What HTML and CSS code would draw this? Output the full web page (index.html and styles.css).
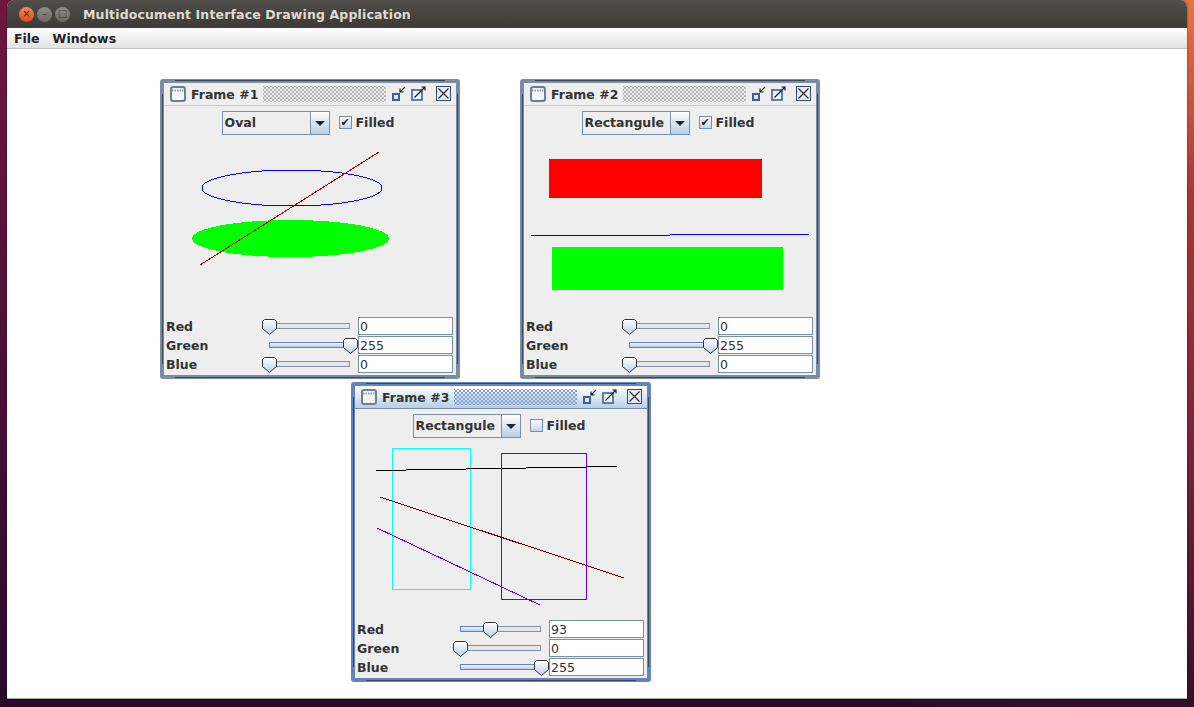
FILE: index.html
```html
<!DOCTYPE html>
<html lang="en">
<head>
    <meta charset="UTF-8">
    <title>Multidocument Interface Drawing Application</title>
    <link rel="stylesheet" href="styles.css">
</head>
<body>
    <svg class="defs" width="0" height="0">
        <defs>
            <linearGradient id="thumbFill" x1="0" y1="0" x2="0" y2="1">
                <stop offset="0" stop-color="#ffffff"/>
                <stop offset="1" stop-color="#b8cfe5"/>
            </linearGradient>
            <symbol id="thumb" viewBox="0 0 15 16">
                <path d="M.5 2.5 2.5 .5h10l2 2v7l-7 6-7-6z" fill="url(#thumbFill)" stroke="#333"/>
            </symbol>
            <symbol id="frameIcon" viewBox="0 0 16 16">
                <rect x="1" y="1" width="14" height="14" rx="2" fill="#f4f4f4" stroke="#6d7f92" stroke-width="2"/>
                <path d="M2 4.5h12" stroke="#8fa3bd" stroke-width="2" stroke-dasharray="1.5 1"/>
            </symbol>
            <symbol id="iconify" viewBox="0 0 15 15">
                <rect x="1" y="8" width="6" height="6" fill="#dfe8f4" stroke="#3f5f92" stroke-width="2"/>
                <path d="M13 1 8 6M8 2.5V6h3.5" fill="none" stroke="#111" stroke-width="1.1"/>
            </symbol>
            <symbol id="maximize" viewBox="0 0 15 15">
                <rect x="1" y="4" width="10" height="10" fill="#eef2f8" stroke="#3f5f92" stroke-width="1.6"/>
                <path d="M3.5 11.5 14 1M10.5 1H14v3.5" fill="none" stroke="#111" stroke-width="1.1"/>
            </symbol>
            <symbol id="close" viewBox="0 0 15 15">
                <rect x=".5" y=".5" width="14" height="14" fill="#e4ebf5" stroke="#33496f"/>
                <path d="M2.5 2.5l10 10M12.5 2.5l-10 10" stroke="#222" stroke-width="1.1"/>
            </symbol>
        </defs>
    </svg>

    <div class="window">
        <header class="titlebar">
            <div class="controls">
                <span class="ctl ctl-close">&#215;</span>
                <span class="ctl ctl-min">&#8211;</span>
                <span class="ctl ctl-max">&#9633;</span>
            </div>
            <span class="app-title">Multidocument Interface Drawing Application</span>
        </header>
        <nav class="menubar">
            <span>File</span>
            <span>Windows</span>
        </nav>

        <main class="desktop">

            <section class="frame frame-1">
                <div class="frame-title">
                    <svg class="frame-icon"><use href="#frameIcon"/></svg>
                    <span class="frame-name">Frame #1</span>
                    <span class="grip"></span>
                    <svg class="btn-icon"><use href="#iconify"/></svg>
                    <svg class="btn-icon"><use href="#maximize"/></svg>
                    <svg class="btn-close"><use href="#close"/></svg>
                </div>
                <div class="tools">
                    <div class="combo"><span class="combo-text">Oval</span><span class="combo-arrow"></span></div>
                    <label class="check"><span class="box">&#10004;</span>Filled</label>
                </div>
                <svg class="canvas" viewBox="0 0 292 178" shape-rendering="crispEdges">
                    <ellipse cx="128" cy="49" rx="90" ry="18" fill="none" stroke="#0000ff"/>
                    <ellipse cx="126.5" cy="99.5" rx="98.5" ry="18.5" fill="#00ff00"/>
                    <line x1="215" y1="13" x2="36" y2="126" stroke="#b00000"/>
                </svg>
                <div class="sliders">
                    <span class="lbl">Red</span>
                    <div class="slider"><div class="track"><svg class="thumb" style="left: 0%"><use href="#thumb"/></svg></div></div>
                    <span class="field">0</span>
                    <span class="lbl">Green</span>
                    <div class="slider"><div class="track"><div class="fill" style="width: 100%"></div><svg class="thumb" style="left: 100%"><use href="#thumb"/></svg></div></div>
                    <span class="field">255</span>
                    <span class="lbl">Blue</span>
                    <div class="slider"><div class="track"><svg class="thumb" style="left: 0%"><use href="#thumb"/></svg></div></div>
                    <span class="field">0</span>
                </div>
            </section>

            <section class="frame frame-2">
                <div class="frame-title">
                    <svg class="frame-icon"><use href="#frameIcon"/></svg>
                    <span class="frame-name">Frame #2</span>
                    <span class="grip"></span>
                    <svg class="btn-icon"><use href="#iconify"/></svg>
                    <svg class="btn-icon"><use href="#maximize"/></svg>
                    <svg class="btn-close"><use href="#close"/></svg>
                </div>
                <div class="tools">
                    <div class="combo"><span class="combo-text">Rectangule</span><span class="combo-arrow"></span></div>
                    <label class="check"><span class="box">&#10004;</span>Filled</label>
                </div>
                <svg class="canvas" viewBox="0 0 292 178" shape-rendering="crispEdges">
                    <rect x="25" y="20" width="213" height="39" fill="#ff0000"/>
                    <rect x="28" y="108" width="231" height="43" fill="#00ff00"/>
                    <path d="M7 96.5H146M146 95.5H285" stroke="#0000ff" fill="none"/>
                </svg>
                <div class="sliders">
                    <span class="lbl">Red</span>
                    <div class="slider"><div class="track"><svg class="thumb" style="left: 0%"><use href="#thumb"/></svg></div></div>
                    <span class="field">0</span>
                    <span class="lbl">Green</span>
                    <div class="slider"><div class="track"><div class="fill" style="width: 100%"></div><svg class="thumb" style="left: 100%"><use href="#thumb"/></svg></div></div>
                    <span class="field">255</span>
                    <span class="lbl">Blue</span>
                    <div class="slider"><div class="track"><svg class="thumb" style="left: 0%"><use href="#thumb"/></svg></div></div>
                    <span class="field">0</span>
                </div>
            </section>

            <section class="frame frame-3 active">
                <div class="frame-title">
                    <svg class="frame-icon"><use href="#frameIcon"/></svg>
                    <span class="frame-name">Frame #3</span>
                    <span class="grip"></span>
                    <svg class="btn-icon"><use href="#iconify"/></svg>
                    <svg class="btn-icon"><use href="#maximize"/></svg>
                    <svg class="btn-close"><use href="#close"/></svg>
                </div>
                <div class="tools">
                    <div class="combo"><span class="combo-text">Rectangule</span><span class="combo-arrow"></span></div>
                    <label class="check"><span class="box"></span>Filled</label>
                </div>
                <svg class="canvas" viewBox="0 0 292 178" shape-rendering="crispEdges">
                    <rect x="37.5" y="6.5" width="78" height="141" fill="none" stroke="#00ffff"/>
                    <rect x="146.5" y="11.5" width="85" height="146" fill="none" stroke="#5d00ff"/>
                    <path d="M21 28.5H51M51 27.5H111M111 26.5H171M171 25.5H231M231 24.5H262" stroke="#000" fill="none"/>
                    <line x1="25" y1="55" x2="269" y2="136" stroke="#5d0000"/>
                    <line x1="22" y1="86" x2="185" y2="163" stroke="#5d00ff"/>
                </svg>
                <div class="sliders">
                    <span class="lbl">Red</span>
                    <div class="slider"><div class="track"><div class="fill" style="width: 36.5%"></div><svg class="thumb" style="left: 36.5%"><use href="#thumb"/></svg></div></div>
                    <span class="field">93</span>
                    <span class="lbl">Green</span>
                    <div class="slider"><div class="track"><svg class="thumb" style="left: 0%"><use href="#thumb"/></svg></div></div>
                    <span class="field">0</span>
                    <span class="lbl">Blue</span>
                    <div class="slider"><div class="track"><div class="fill" style="width: 100%"></div><svg class="thumb" style="left: 100%"><use href="#thumb"/></svg></div></div>
                    <span class="field">255</span>
                </div>
            </section>

        </main>
    </div>
</body>
</html>
```

FILE: styles.css
```css
* {
    box-sizing: border-box;
}

html, body {
    height: 100%;
}

body {
    margin: 0;
    padding: 0 7px 8px;
    overflow: hidden;
    font-family: 'DejaVu Sans', sans-serif;
    font-size: 12.5px;
    color: #333;
    background:
        radial-gradient(circle at 100% 0, #e8743f 0, rgba(200, 70, 50, 0.7) 14%, rgba(120, 20, 50, 0) 55%),
        linear-gradient(180deg, #6f1740 0%, #4a1038 55%, #260a2c 100%);
}

.defs {
    position: absolute;
}

/* main window */
.window {
    height: 100%;
    display: flex;
    flex-direction: column;
    background: #fff;
    border-radius: 7px 7px 0 0;
    box-shadow: 0 0 2px rgba(0, 0, 0, 0.6);
}

.titlebar {
    height: 28px;
    flex: none;
    display: flex;
    align-items: center;
    padding-left: 12px;
    background: linear-gradient(180deg, #4f4e49, #3c3b37);
    border-radius: 7px 7px 0 0;
}

.controls {
    display: flex;
    gap: 3px;
}

.ctl {
    width: 15px;
    height: 15px;
    border-radius: 50%;
    display: flex;
    align-items: center;
    justify-content: center;
    font-size: 10px;
    line-height: 1;
    color: #3c3b37;
    background: linear-gradient(180deg, #8f8e88, #6a6963);
}

.ctl-close {
    color: #5a2413;
    background: linear-gradient(180deg, #f58a5c, #d9481c);
}

.app-title {
    margin-left: 13px;
    font-weight: bold;
    font-size: 12.5px;
    letter-spacing: 0.15px;
    color: #dfdbd2;
    white-space: nowrap;
}

.menubar {
    height: 21px;
    flex: none;
    display: flex;
    align-items: center;
    gap: 13px;
    padding: 0 7px;
    font-weight: bold;
    color: #222;
    background: linear-gradient(180deg, #ffffff, #e2e2e2);
    border-bottom: 1px solid #c2c2c2;
}

.desktop {
    flex: 1;
    position: relative;
    background: #fff;
    border-bottom: 1px solid #a8a8a8;
}

/* internal frames */
.frame {
    position: absolute;
    width: 300px;
    height: 300px;
    display: flex;
    flex-direction: column;
    background: #eeeeee;
    border: 4px solid #7a8ca5;
    border-radius: 3px;
}

.frame::before,
.frame::after {
    content: "";
    position: absolute;
    pointer-events: none;
}

.frame::before {
    left: 11px;
    right: 11px;
    top: -3px;
    bottom: -3px;
    border-top: 1px solid #3c4858;
    border-bottom: 1px solid #3c4858;
}

.frame::after {
    top: 11px;
    bottom: 11px;
    left: -2px;
    right: -2px;
    border-left: 1px solid #3c4858;
    border-right: 1px solid #3c4858;
}

.frame-1 {
    left: 153px;
    top: 30px;
}

.frame-2 {
    left: 513px;
    top: 30px;
}

.frame-3 {
    left: 344px;
    top: 333px;
}

.frame.active {
    border-color: #6382bf;
}

.frame-title {
    height: 23px;
    flex: none;
    display: flex;
    align-items: center;
    padding: 0 5px 0 6px;
    background: #eeeeee;
    border-bottom: 1px solid #c8ccd2;
}

.active .frame-title {
    background: linear-gradient(180deg, #ffffff, #b8cfe5);
    border-bottom-color: #7a8ba8;
}

.frame-icon {
    width: 16px;
    height: 16px;
    flex: none;
}

.frame-name {
    width: 66px;
    margin-left: 5px;
    flex: none;
    font-weight: bold;
    white-space: nowrap;
}

.grip {
    width: 123px;
    height: 16px;
    margin: 0 6px;
    flex: none;
    background-image:
        radial-gradient(circle, #b4b4b4 0.8px, transparent 1px),
        radial-gradient(circle, #b4b4b4 0.8px, transparent 1px);
    background-size: 4px 4px;
    background-position: 0 0, 2px 2px;
}

.active .grip {
    background-image:
        radial-gradient(circle, #7f9fd0 0.8px, transparent 1px),
        radial-gradient(circle, #7f9fd0 0.8px, transparent 1px);
}

.btn-icon {
    width: 15px;
    height: 15px;
    margin: -2px 4px 0 0;
    flex: none;
}

.btn-close {
    width: 15px;
    height: 15px;
    margin: -1px 0 0 6px;
    flex: none;
}

/* shape combo and filled box */
.tools {
    height: 33px;
    flex: none;
    display: flex;
    justify-content: center;
    align-items: flex-start;
    padding-top: 5px;
}

.combo {
    width: 108px;
    height: 24px;
    display: flex;
    background: #eeeeee;
    border: 1px solid #7b8ea8;
    font-weight: bold;
}

.combo-text {
    flex: 1;
    padding-left: 2px;
    line-height: 21px;
    white-space: nowrap;
}

.combo-arrow {
    width: 19px;
    position: relative;
    border-left: 1px solid #7b8ea8;
    background: linear-gradient(180deg, #ffffff, #b8cfe5);
}

.combo-arrow::after {
    content: "";
    position: absolute;
    left: 4px;
    top: 9px;
    border-style: solid;
    border-width: 5px 5px 0;
    border-color: #222 transparent transparent;
}

.check {
    display: flex;
    align-items: center;
    height: 22px;
    margin-left: 9px;
    padding-right: 4px;
    font-weight: bold;
}

.box {
    width: 13px;
    height: 13px;
    margin-right: 4px;
    display: flex;
    align-items: center;
    justify-content: center;
    font-size: 11px;
    font-weight: normal;
    line-height: 1;
    color: #222;
    border: 1px solid #7b8ea8;
    background: linear-gradient(180deg, #ffffff, #c4d6e8);
}

.canvas {
    width: 292px;
    height: 178px;
    flex: none;
    display: block;
}

/* colour sliders */
.sliders {
    display: grid;
    grid-template-columns: 98px 96px 95px;
    grid-auto-rows: 19px;
}

.lbl {
    padding-left: 2px;
    line-height: 19px;
    font-weight: bold;
}

.slider {
    padding: 6px 8px 0 7px;
}

.track {
    position: relative;
    height: 6px;
    background: #e6e6e6;
    box-shadow: inset 0 0 0 1px #8492a6;
}

.fill {
    height: 100%;
    background: linear-gradient(180deg, #ffffff, #a9c3e0);
    box-shadow: inset 0 0 0 1px #6382bf;
}

.thumb {
    position: absolute;
    top: -4px;
    width: 15px;
    height: 16px;
    margin-left: -7px;
}

.field {
    height: 18px;
    padding-left: 1px;
    line-height: 17px;
    color: #333;
    background: #fff;
    border: 1px solid #7b8ea8;
}
```
